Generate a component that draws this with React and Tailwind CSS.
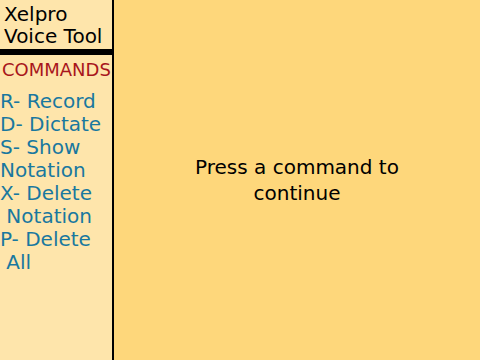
export default function App() {
  const font = { fontFamily: '"DejaVu Sans", Verdana, sans-serif' };
  const cmds = ["R- Record", "D- Dictate", "S- Show", "Notation", "X- Delete", " Notation", "P- Delete", " All"];
  return (
    <div className="flex w-[480px] h-[360px] overflow-hidden" style={font}>
      <div className="w-[112px] shrink-0 bg-[#fee5ab] flex flex-col">
        <div className="pl-[4px] pt-[3px] text-[20px] leading-[22px] text-black h-[49px]">
          <div>Xelpro</div>
          <div className="whitespace-nowrap">Voice Tool</div>
        </div>
        <div className="h-[6px] bg-black"></div>
        <div className="pl-[2px] pt-[5px] text-[18px] leading-[20px] text-[#a8161c] whitespace-nowrap">COMMANDS</div>
        <div className="pt-[10px] text-[20px] leading-[23px] text-[#19789f]">
          {cmds.map((c, i) => (
            <div key={i} className="whitespace-pre">{c}</div>
          ))}
        </div>
      </div>
      <div className="w-[2px] bg-black shrink-0"></div>
      <div className="flex-1 bg-[#fed77b] flex items-center justify-center">
        <div className="text-center text-[20px] leading-[26px] text-black">
          Press a command to
          <br />
          continue
        </div>
      </div>
    </div>
  );
}
